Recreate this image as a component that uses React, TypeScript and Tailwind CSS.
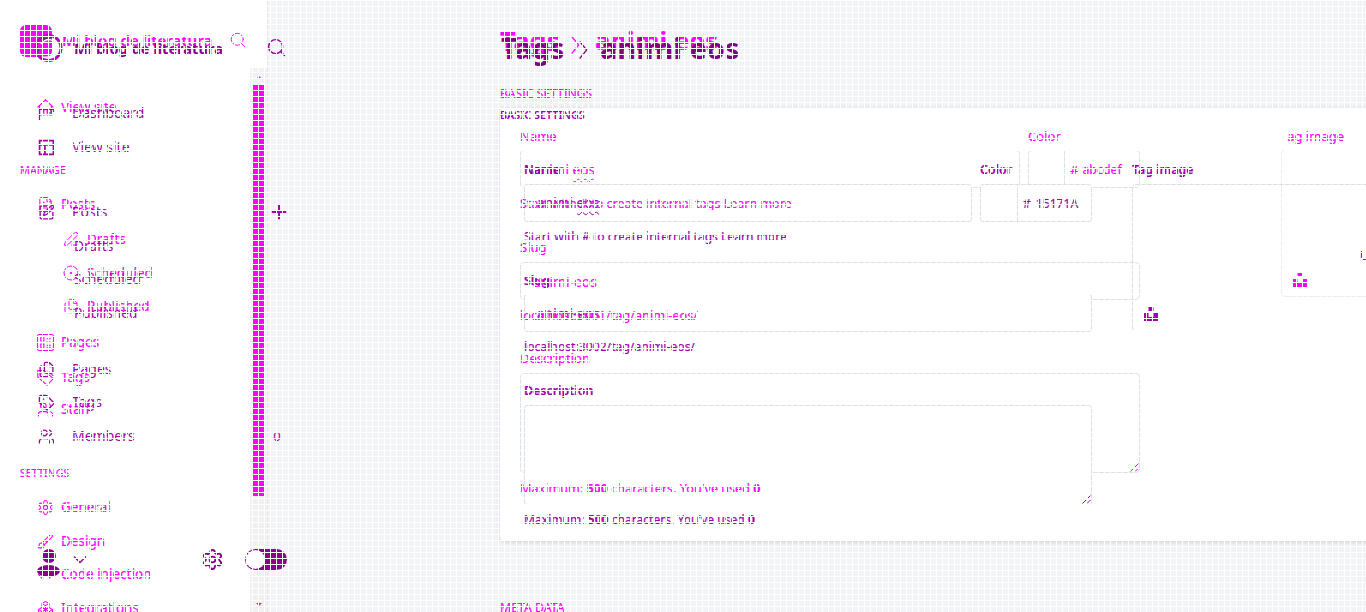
import type { ReactNode } from 'react';
import {
  FileText, PenLine, Files, Tag, Users, Settings, Brush, Code, Boxes,
  Search, Plus, SquarePen,
} from 'lucide-react';

type IconProps = { size?: number; strokeWidth?: number; className?: string };
type IconType = (props: IconProps) => ReactNode;
type NavRow = { label: string; gap: string; icon?: IconType | typeof Tag; sub?: boolean; head?: string; tail?: ReactNode };

function Home({ size = 16, className }: IconProps) {
  return (
    <svg width={size} height={size} viewBox="0 0 16 16" fill="none" stroke="currentColor" className={className}>
      <path d="M0.5 8L8 0.8 15.5 8M2.5 6.5v8.5h4v-5h3v5h4V6.5" />
    </svg>
  );
}

function ListBox({ size = 16, className }: IconProps) {
  return (
    <svg width={size} height={size} viewBox="0 0 16 16" fill="none" stroke="currentColor" className={className}>
      <rect x="0.5" y="0.5" width="15" height="15" rx="1.5" />
      <path d="M3.5 3.5h3v3h-3zM3.5 9.5h3v3h-3zM9 4.5h4M9 7.5h4M9 10.5h4M9 12.5h4" />
    </svg>
  );
}

function TagDown({ size = 16, className }: IconProps) {
  return (
    <svg width={size} height={size} viewBox="0 0 16 16" fill="none" stroke="currentColor" className={className}>
      <path d="M0.7 1.5h6L15.3 9 9.5 15.3 0.7 7.5zM3.5 4.5h1M10 1.5l5.3 5" />
    </svg>
  );
}

function Layout({ size = 16, className }: IconProps) {
  return (
    <svg width={size} height={size} viewBox="0 0 16 16" fill="none" stroke="currentColor" strokeWidth="1.6" className={className}>
      <path d="M1.5 1.5h13v13h-13zM1.5 5.5h13M6.5 5.5v9" />
    </svg>
  );
}

function Dial({ size = 16, className }: IconProps) {
  return (
    <svg width={size} height={size} viewBox="0 0 16 16" fill="none" stroke="currentColor" className={className}>
      <circle cx="8" cy="8" r="7" />
      <circle cx="8" cy="8" r="0.8" fill="currentColor" />
    </svg>
  );
}

const brightNav: NavRow[] = [
  { label: 'View site', gap: 'mt-0', icon: Home },
  { label: 'MANAGE', gap: 'mt-[43px]', head: 'pl-5 text-[10.9px]' },
  { label: 'Posts', gap: 'mt-[14px]', icon: FileText },
  { label: 'Drafts', gap: 'mt-[15px]', icon: PenLine, sub: true },
  { label: 'Scheduled', gap: 'mt-[14px]', icon: Dial, sub: true },
  { label: 'Published', gap: 'mt-[13px]', icon: Files, sub: true },
  { label: 'Pages', gap: 'mt-[16px]', icon: ListBox },
  { label: 'Tags', gap: 'mt-[15px]', icon: TagDown },
  { label: 'Staff', gap: 'mt-[12px]', icon: Users },
  { label: 'SETTINGS', gap: 'mt-[44px]', head: 'pl-5 text-[10.7px]' },
  { label: 'General', gap: 'mt-[14px]', icon: Settings },
  { label: 'Design', gap: 'mt-[14px]', icon: Brush },
  { label: 'Code injection', gap: 'mt-[13px]', icon: Code },
  { label: 'Integrations', gap: 'mt-[14px]', icon: Boxes },
];

const darkNav: NavRow[] = [
  { label: 'Dashboard', gap: 'mt-0' },
  { label: 'View site', gap: 'mt-[14px]', icon: Layout },
  { label: 'Posts', gap: 'mt-[45px]', icon: SquarePen, tail: <Plus size={22} strokeWidth={2.2} className="-ml-[2px]" /> },
  { label: 'Drafts', gap: 'mt-[14px]', sub: true },
  { label: 'Scheduled', gap: 'mt-[13px]', sub: true },
  { label: 'Published', gap: 'mt-[14px]', sub: true },
  { label: 'Pages', gap: 'mt-[36px]', icon: Files },
  { label: 'Tags', gap: 'mt-[13px]', icon: Tag },
  { label: 'Members', gap: 'mt-[14px]', icon: Users, tail: <span className="-ml-px w-4 text-center text-[13px]">0</span> },
];

function Caret({ className }: { className: string }) {
  return (
    <svg width="9" height="20" viewBox="0 0 9 20" fill="none" stroke="currentColor" strokeWidth="1.2" className={className}>
      <path d="M0.7 1.5l7 8.5-7 8.5" />
    </svg>
  );
}

function UnsplashMark() {
  return (
    <svg width="14" height="14" viewBox="0 0 14 14" fill="currentColor">
      <path d="M4.5 0h5v4h-5zM0 6h4.5v4h5V6H14v8H0z" />
    </svg>
  );
}

function Grip() {
  return (
    <svg width="9" height="9" viewBox="0 0 9 9" stroke="currentColor" strokeWidth="1" fill="none">
      <path d="M0.5 8.5l8-8M5 8.5L8.5 5" />
    </svg>
  );
}

function Squiggle({ children }: { children: string }) {
  return <span className="underline decoration-wavy decoration-1 underline-offset-[3px]">{children}</span>;
}

function BrightLayer() {
  return (
    <div className="flex h-[612px] w-[1366px] overflow-hidden text-[13px] leading-5 text-[#ff00ff] [-webkit-text-stroke:0.2px_#ff00ff]">
      <aside className="flex h-full w-[267px] shrink-0 flex-col bg-white">
        <header className="flex h-[68px] items-start pl-5 pt-[25px]">
          <div className="h-8 w-8 shrink-0 rounded-md bg-[#ff00ff]" />
          <span className="ml-[10px] mt-[5px] w-[168px] whitespace-nowrap text-[15.1px] font-semibold">Mi blog de literatura</span>
          <Search size={18} strokeWidth={1.2} className="-ml-px mt-[6px]" />
        </header>
        <div className="flex min-h-0 flex-1">
          <nav className="w-[250px] overflow-hidden pt-[29px]">
            {brightNav.map((r) => (
              <div key={r.label} className={`flex h-5 shrink-0 items-center whitespace-nowrap ${r.gap} ${r.head ? r.head : r.sub ? 'pl-[63px] text-[13.5px]' : 'pl-[37px] text-[13.5px]'}`}>
                {r.icon && <r.icon size={r.sub ? 16 : 17} strokeWidth={1.5} className={r.sub ? 'mr-[8px]' : 'mr-[7px]'} />}
                <span>{r.label}</span>
              </div>
            ))}
          </nav>
          <div className="flex w-[17px] flex-col items-center justify-between bg-[#f1f1f1] pb-[6px] pt-[8px]">
            <span className="h-0 w-0 border-x-[3px] border-b-[3px] border-x-transparent border-b-[#ff00ff]" />
            <span className="mb-[107px] mt-[6px] w-[11px] flex-1 bg-[#ff00ff]" />
            <span className="h-0 w-0 border-x-[3px] border-t-[3px] border-x-transparent border-t-[#ff00ff]" />
          </div>
        </div>
      </aside>
      <main className="flex h-full w-[1099px] shrink-0 flex-col border-l border-[#e7e8eb] pl-[232px]">
        <h1 className="flex h-[84px] shrink-0 items-start pt-[23px] text-[27px] font-bold leading-[36px]">
          <span className="w-[71px]">Tags</span>
          <Caret className="mt-[12px]" />
          <span className="ml-[15px] whitespace-nowrap text-[25.6px]">animi eos</span>
        </h1>
        <h2 className="h-6 shrink-0 text-[12px]">BASIC SETTINGS</h2>
        <section className="flex h-[433px] w-[920px] shrink-0 rounded-[5px] bg-white pl-5 pt-[18px] shadow-[0_1px_5px_rgba(0,0,0,0.15)]">
          <div className="flex w-[620px] shrink-0 flex-col">
            <div className="flex gap-2">
              <div className="w-[500px]">
                <div>Name</div>
                <div className="mt-[4px] flex h-[38px] items-center rounded border border-[#dae3e9] pl-3 pt-[2px] text-[13.7px]">
                  <span>animi <Squiggle>eos</Squiggle></span>
                </div>
              </div>
              <div className="w-[112px]">
                <div>Color</div>
                <div className="mt-[4px] flex h-[38px] rounded border border-[#dae3e9]">
                  <span className="w-9 border-r border-[#dae3e9]" />
                  <span className="flex items-center gap-[4px] pl-[5px] pt-[2px]"><span>#</span><span className="text-[12.4px]">abcdef</span></span>
                </div>
              </div>
            </div>
            <p className="relative z-20 mb-[-1px] mt-[6px] whitespace-nowrap text-[12.5px]">Start with # to create internal tags Learn more</p>
            <div className="mt-[24px]">Slug</div>
            <div className="mt-[5px] flex h-[38px] items-center rounded border border-[#dae3e9] pl-3 pt-[2px] text-[13.9px]">animi-eos</div>
            <p className="relative z-20 mt-[5px] text-[12.7px]">localhost:3001/tag/animi-eos/</p>
            <div className="relative z-20 mt-[23px]">Description</div>
            <div className="mt-[5px] flex h-[100px] items-end justify-end rounded border border-[#dae3e9]"><Grip /></div>
            <p className="relative z-20 mt-[6px] whitespace-nowrap text-[12.6px]">Maximum: <b>500</b> characters. You've used <b>0</b></p>
          </div>
          <div className="ml-[141px] w-[240px]">
            <div className="text-[13px]"><span className="text-[#f0f3f5] [-webkit-text-stroke:0]">T</span>ag image</div>
            <div className="mt-[4px] flex h-[147px] items-end rounded border border-[#e7edf1] pb-[9px] pl-[11px]"><UnsplashMark /></div>
          </div>
        </section>
        <h2 className="mt-[57px] shrink-0 text-[12.3px]">META DATA</h2>
      </main>
    </div>
  );
}

function DarkLayer() {
  return (
    <div className="absolute inset-0 z-10 flex overflow-hidden text-[14px] leading-5 text-[#a000a5]">
      <aside className="flex w-[300px] shrink-0 flex-col">
        <header className="flex h-[103px] items-start pl-[34px] pt-[33px]">
          <svg width="29" height="30" viewBox="0 0 29 30" fill="none" className="shrink-0">
            <path d="M4 23.5H19.5V4L25 9v11l-6 6H9z" fill="#fff" />
            <circle cx="14.5" cy="15" r="12.5" stroke="#b800b8" strokeWidth="3" />
            <path d="M7 9l3-3 8-1.5M2.5 14l2 4" stroke="#4d404d" strokeWidth="2" />
            <path d="M7 11q6-7 12-3" stroke="#fff" strokeWidth="1.5" />
          </svg>
          <span className="ml-[11px] mt-[5px] w-[193px] whitespace-nowrap text-[14.6px] font-bold text-[#8b008b]">Mi blog de literatura</span>
          <Search size={21} strokeWidth={1.7} className="-ml-px mt-[4px]" />
        </header>
        <nav className="h-[444px]">
          {darkNav.map((r) => (
            <div key={r.label} className={`flex h-5 items-center whitespace-nowrap pl-[38px] ${r.gap}`}>
              <span className="w-[34px]">
                {r.icon && <r.icon size={17} strokeWidth={1.9} />}
                {r.label === 'Dashboard' && (
                  <svg width="17" height="17" viewBox="0 0 17 17" fill="none" stroke="currentColor" strokeWidth="1.2">
                    <path d="M1.5 15V4.5H15.5V7M5 4.5V8M10 4.5V8H13V5" />
                  </svg>
                )}
              </span>
              <span className={r.sub ? 'w-[198px] pl-[2px] text-[13.7px]' : 'w-[198px]'}>{r.label}</span>
              {r.tail}
            </div>
          ))}
        </nav>
        <footer className="flex h-[30px] items-start pl-[37px] text-[#8b008b]">
          <svg width="24" height="30" viewBox="0 0 24 30" fill="currentColor">
            <circle cx="12" cy="9" r="7" />
            <ellipse cx="11.5" cy="24" rx="11.5" ry="6" />
          </svg>
          <svg width="14" height="10" viewBox="0 0 14 10" fill="none" stroke="currentColor" strokeWidth="1.3" className="ml-[12px] mt-[8px]">
            <path d="M1 1.5l6 6 6-6" />
          </svg>
          <Settings size={23} strokeWidth={2} className="ml-[114px] mt-[1px]" />
          <div className="ml-[21px] mt-[2px] flex h-[21px] w-[42px] rounded-full bg-[#8b008b] p-px">
            <span className="h-[19px] w-[19px] rounded-full bg-white" />
          </div>
        </footer>
      </aside>
      <main className="flex w-[1066px] flex-col pl-[200px]">
        <h1 className="flex h-[105px] items-start pl-px pt-[30px] text-[28.4px] font-bold leading-[36px] text-[#800080]">
          <span className="w-[78px]">Tags</span>
          <Caret className="mt-[10px]" />
          <span className="ml-[12px] whitespace-nowrap text-[29px]">animi eos</span>
        </h1>
        <h2 className="h-[55px] text-[10.8px] font-semibold">BASIC SETTINGS</h2>
        <div className="flex pl-6 text-[12.1px] [-webkit-text-stroke:0.2px_#a000a5]">
          <div className="flex w-[568px] shrink-0 flex-col">
            <div className="flex gap-2">
              <div className="w-[448px]">
                <div className="text-[12.4px] font-semibold text-[#8b008b]">Name</div>
                <div className="mt-[4px] flex h-[38px] items-center rounded-[3px] border border-[#dddfe1] bg-white pl-3 text-[13.7px]">
                  <span>animi <Squiggle>eos</Squiggle></span>
                </div>
              </div>
              <div className="w-[112px]">
                <div className="text-[12.4px] font-semibold">Color</div>
                <div className="mt-[4px] flex h-[38px] rounded-[3px] border border-[#dddfe1] bg-white">
                  <span className="w-[37px] border-r border-[#dddfe1]" />
                  <span className="flex items-center gap-[5px] pl-[5px] pt-px"><span>#</span><span>15171A</span></span>
                </div>
              </div>
            </div>
            <p className="mt-[5px] whitespace-nowrap">Start with # to create internal tags Learn more</p>
            <div className="mt-[24px] text-[12.4px] font-semibold">Slug</div>
            <div className="mt-[3px] flex h-[38px] items-center rounded-[3px] border border-[#dddfe1] bg-white pl-3 pt-[2px] text-[13.7px]">animi-eos</div>
            <p className="mt-[5px] text-[12.2px]">localhost:3002/tag/animi-eos/</p>
            <div className="mt-[24px] text-[12.4px] font-semibold">Description</div>
            <div className="mt-[4px] flex h-[100px] items-end justify-end rounded-[3px] border border-[#dddfe1] bg-white"><Grip /></div>
            <p className="mt-[5px] whitespace-nowrap">Maximum: <b>500</b> characters. You've used <b>0</b></p>
          </div>
          <div className="ml-[40px] w-[540px] shrink-0">
            <div className="text-[12.3px] font-semibold">Tag image</div>
            <div className="mt-[4px] flex h-[147px] flex-col justify-between rounded-[3px] border border-[#dddfe1] pb-[9px] pl-[11px] pt-[61px]">
              <span className="pl-[216px] font-semibold">Upload image</span>
              <UnsplashMark />
            </div>
          </div>
        </div>
      </main>
    </div>
  );
}

export default function App() {
  return (
    <div className="relative h-[612px] w-[1366px] overflow-hidden bg-[#f2f3f6] font-['Noto_Sans',sans-serif]">
      <BrightLayer />
      <DarkLayer />
      <div className="pointer-events-none absolute inset-0 z-30 bg-[linear-gradient(to_right,#fff_1px,transparent_1px),linear-gradient(to_bottom,#fff_1px,transparent_1px)] bg-[size:6px_6px]" />
    </div>
  );
}
